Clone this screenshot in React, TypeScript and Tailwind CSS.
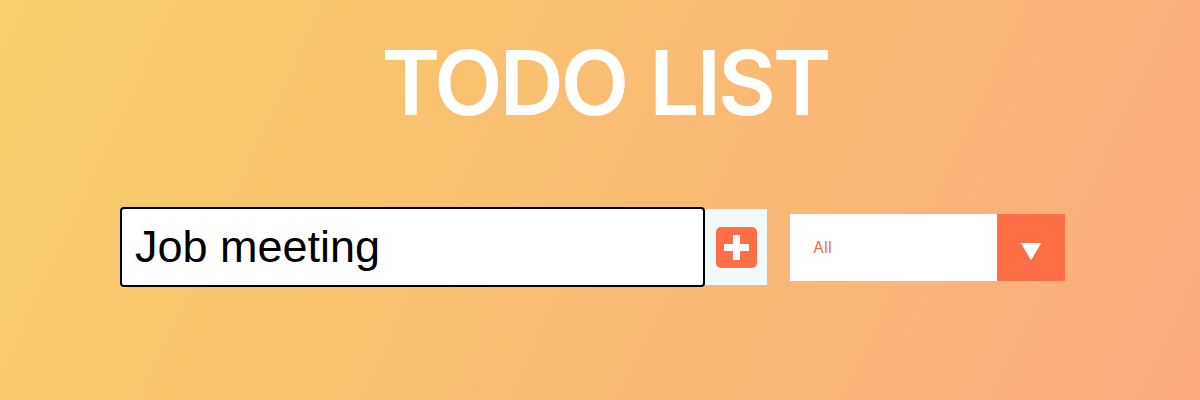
import { useState } from 'react';

const App = () => {
  const [text, setText] = useState('Job meeting');

  return (
    <div className="min-h-[400px] w-full bg-[linear-gradient(115deg,#f7ce68_0%,#fbab7e_100%)] font-['Inter',sans-serif] overflow-hidden">
      {/* Header */}
      <header className="flex justify-center pt-[23px] pl-[10px]">
        <h1 className="text-[89px] leading-[120px] font-semibold text-white tracking-[-0.035em] [word-spacing:4px]">TODO LIST</h1>
      </header>

      {/* Form */}
      <form className="flex items-center justify-center mt-[64px] pr-[15px]" onSubmit={(e) => e.preventDefault()}>
        <input
          type="text"
          value={text}
          onChange={(e) => setText(e.target.value)}
          onFocus={(e) => e.target.setSelectionRange(text.length, text.length)}
          autoFocus
          className="w-[585px] h-[80px] bg-white rounded-[4px] border-2 border-black outline-none px-[13px] text-[45px] text-black caret-black font-['Liberation_Sans',Arial,sans-serif]"
        />
        <button type="submit" className="w-[62px] h-[76px] bg-[#f0fafa] flex items-center justify-center">
          <svg width="41" height="41" viewBox="0 0 41 41">
            <rect x="0" y="0" width="41" height="41" rx="5" fill="#ff6f47" />
            <path d="M17 8h7v9h9v7h-9v9h-7v-9H8v-7h9z" fill="#fff" />
          </svg>
        </button>
        <div className="ml-[23px] flex h-[67px] w-[275px] bg-white">
          <div className="flex-1 flex items-center pl-[23px] text-[16px] text-[#e8705a]">All</div>
          <div className="w-[68px] bg-[#ff6f47] flex items-center justify-center text-white text-[22px] pt-[8px]">▼</div>
        </div>
      </form>
    </div>
  );
};

export default App;
